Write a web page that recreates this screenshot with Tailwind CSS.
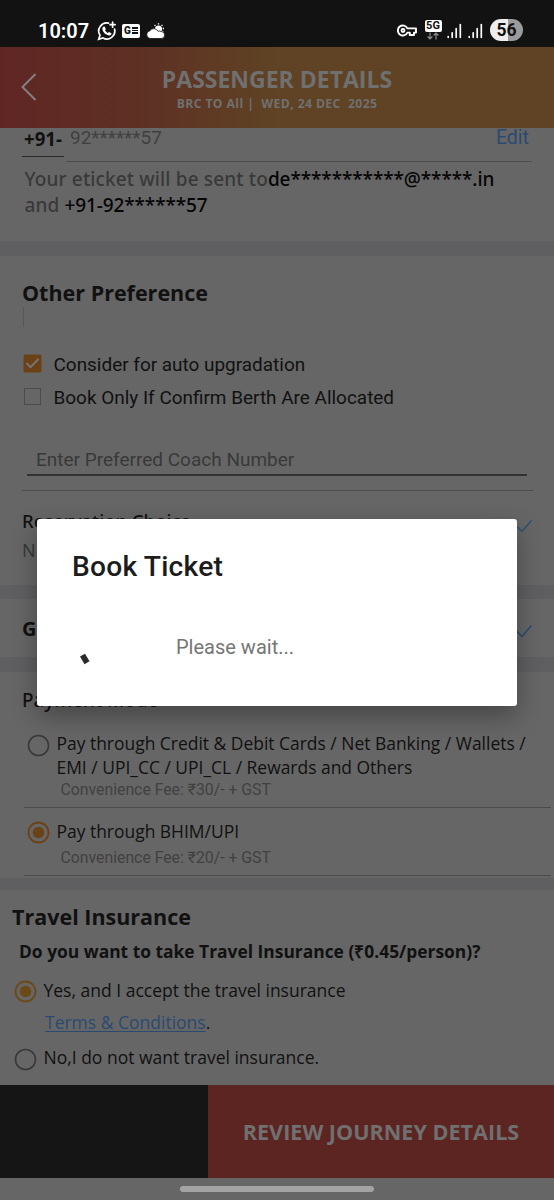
<!DOCTYPE html>
<html lang="en">
<head>
<meta charset="utf-8">
<title>Passenger Details</title>
<script src="https://cdn.jsdelivr.net/npm/@tailwindcss/browser@4"></script>
</head>
<body class="bg-[#666666]">
<div class="relative w-[554px] h-[1200px] overflow-hidden flex flex-col bg-[#666666] text-[#111111] font-['Open_Sans',sans-serif] whitespace-nowrap">

  <!-- Status bar -->
  <div class="h-[47px] shrink-0 bg-[#121212] flex items-center pl-[38px] pr-[31px] pt-[14px] text-white">
    <span class="w-[59px] font-['Roboto',sans-serif] font-semibold text-[20px] leading-none">10:07</span>
    <svg class="w-[20px] h-[20px]" viewBox="0 0 20 20" fill="none" stroke="#fff" stroke-width="1.7" stroke-linecap="round">
      <path d="M11.5 2.2A8 8 0 0 0 3 14.3L1.7 18.3L6 17A8 8 0 0 0 17.6 8.2"/>
      <path d="M15.6 1.2v5M13.1 3.7h5"/>
      <path d="M6.3 5.8l1.3-.4 1.3 2.7-.9 1.2c.7 1.3 1.5 2 2.8 2.7l1.2-1 2.5 1.2c.1 1.5-1.2 2.4-2.5 2.2-3.500-.6-6.300-3.500-6.600-6.200-.1-1 .2-1.900.9-2.400z" fill="#fff" stroke="none"/>
    </svg>
    <span class="ml-[5px] w-[18px] h-[14px] rounded-[2px] bg-white flex items-center gap-[1px] pl-[2px]">
      <span class="font-['Roboto',sans-serif] font-black text-[10px] leading-none text-[#121212]">G</span>
      <span class="flex flex-col gap-[1px]"><i class="block w-[6px] h-[2px] bg-[#121212]"></i><i class="block w-[6px] h-[1px] bg-[#121212]"></i><i class="block w-[6px] h-[2px] bg-[#121212]"></i></span>
    </span>
    <svg class="ml-[6px] w-[19px] h-[16px]" viewBox="0 0 19 16">
      <circle cx="12.500" cy="6" r="3.600" fill="#fff"/>
      <path d="M12.500 .3v1.200M8.600 1.800l.8 1M16.400 1.800l-.8 1M18 5.500h-1.200M17.300 9l-1-.6" stroke="#fff" stroke-width="1.300"/>
      <path d="M4.200 15.500a3.900 3.900 0 0 1-.3-7.700A4.600 4.600 0 0 1 12 8.300a3.400 3.400 0 0 1 3.300.2 3.500 3.500 0 0 1-.3 7z" fill="#fff" stroke="#121212" stroke-width=".8"/>
    </svg>
    <svg class="ml-auto w-[20px] h-[13px]" viewBox="0 0 20 13" fill="none" stroke="#fff" stroke-width="1.900" stroke-linejoin="round">
      <path d="M10.400 4.400A5 5 0 1 0 10.400 8.600H12.800V11H17V8.600H19V4.400Z"/>
      <circle cx="6" cy="6.500" r="1.500"/>
    </svg>
    <span class="ml-[7px] mt-[-2px] w-[18px] flex flex-col items-center">
      <span class="w-[17px] h-[12px] rounded-[2px] bg-white text-[#121212] font-['Roboto',sans-serif] font-bold text-[11px] leading-[12px] text-center">5G</span>
      <svg class="w-[12px] h-[8px]" viewBox="0 0 12 8" fill="none" stroke="#8a8a8a" stroke-width="1.200"><path d="M3 .5v6M.6 4.500L3 7l2.400-2.500M9 7.500v-6M6.600 3.500L9 1l2.400 2.500"/></svg>
    </span>
    <svg class="ml-[5px] w-[15px] h-[16px]" viewBox="0 0 15 16" stroke="#fff" stroke-width="1.700" stroke-linecap="round"><path d="M1.200 13.500v.8M5.200 9.800v4.500M9.200 5.700v8.600M13.300 1.500v12.800"/></svg>
    <svg class="ml-[6px] w-[15px] h-[16px]" viewBox="0 0 15 16" stroke="#fff" stroke-width="1.700" stroke-linecap="round"><path d="M1.200 13.500v.8M5.200 9.800v4.500M9.200 5.700v8.600M13.300 1.500v12.800"/></svg>
    <span class="ml-[7px] mt-[-1px] w-[33px] h-[22px] rounded-full bg-[linear-gradient(90deg,#eeeeee_56%,#9b9b9b_56%)] text-[#121212] font-['Roboto',sans-serif] font-bold text-[17.500px] leading-[22px] text-center">56</span>
  </div>

  <!-- Title bar -->
  <div class="h-[81px] shrink-0 flex bg-[linear-gradient(90deg,#602624_0%,#5e3024_25%,#5f4324_50%,#5f4324_100%)] text-[#707070]">
    <svg class="w-[16px] h-[28px] ml-[21px] mt-[26px] shrink-0" viewBox="0 0 16 28" fill="none" stroke="#818181" stroke-width="2"><path d="M14.500 1L1.500 14L14.500 27"/></svg>
    <div class="flex-1 flex flex-col items-center pt-[18px]">
      <div class="font-bold text-[23px] leading-[29px]">PASSENGER DETAILS</div>
      <div class="font-bold text-[12.200px] leading-[20px] tracking-[0.4px] whitespace-pre">BRC TO All |  WED, 24 DEC  2025</div>
    </div>
    <div class="w-[37px]"></div>
  </div>

  <!-- Contact -->
  <section class="h-[113px] shrink-0 text-[19px]">
    <div class="flex h-[34px]">
      <div class="ml-[22px] w-[42px] h-[29px] pl-[2px] border-b border-[#2b2b2b] font-bold text-[18.700px] leading-[22px]">+91-</div>
      <div class="ml-[2px] w-[466px] h-[34px] pl-[4px] pr-[3px] border-b border-[#4e4e4e] flex justify-between font-['Roboto',sans-serif] text-[19.500px] leading-[20px]">
        <span class="text-[19px] text-[#404040]">92******57</span><span class="text-[#2b4a70]">Edit</span>
      </div>
    </div>
    <p class="ml-[24.500px] mt-[4px] leading-[26px] font-['Noto_Sans',sans-serif] font-medium text-[#393939] tracking-[0.14px]">Your eticket will be sent to<span class="text-[#050505] tracking-[-0.1px]">de***********@*****.in</span><br>and <span class="text-[#050505] tracking-[-0.12px]">+91-92******57</span></p>
  </section>
  <div class="h-[15px] shrink-0 bg-[#5f5f62]"></div>

  <!-- Preferences -->
  <section class="h-[329px] shrink-0 pt-[23px] font-['Roboto',sans-serif]">
    <h2 class="pl-[22px] h-[28px] leading-[27px] font-['Open_Sans',sans-serif] font-bold text-[21.500px]">Other Preference</h2>
    <div class="ml-[23px] w-px h-[20px] bg-[#575757]"></div>
    <div class="mt-[20px] h-[33px] flex items-center pl-[23px] text-[18.950px]">
      <svg class="w-[19px] h-[19px] mr-[11.500px]" viewBox="0 0 19 19"><rect x=".5" y=".5" width="18" height="18" rx="1.500" fill="#6b4218"/><path d="M3.500 9l4 4.200L15.500 5" fill="none" stroke="#777" stroke-width="1.800"/></svg>
      <span class="pt-[3px]">Consider for auto upgradation</span>
    </div>
    <div class="h-[33px] flex items-center pl-[24px] text-[18.950px]">
      <span class="w-[17px] h-[17px] mr-[12.500px] border border-[#4c4c4c]"></span><span class="pt-[3px]">Book Only If Confirm Berth Are Allocated</span>
    </div>
    <div class="mt-[31px] ml-[27px] w-[500px] h-[32px] pl-[9px] border-b-2 border-[#333333] leading-[31px] text-[19px] text-[#393939]">Enter Preferred Coach Number</div>
    <div class="mt-[14px] ml-[22px] w-[511px] h-px bg-[#4d4d4d]"></div>
    <div class="mt-[16px] flex justify-between px-[22px] font-['Noto_Sans',sans-serif]">
      <div>
        <div class="text-[18.500px] font-medium leading-[28px]">Reservation Choice</div>
        <div class="text-[18px] leading-[30px] text-[#393939]">N</div>
      </div>
      <svg class="w-[22px] h-[14px] mt-[12px]" viewBox="0 0 22 14" fill="none" stroke="#2b5270" stroke-width="1.500"><path d="M5 5.500l7 7L21.500 1.500"/></svg>
    </div>
  </section>
  <div class="h-[14px] shrink-0 bg-[#5f5f62]"></div>

  <section class="h-[58px] shrink-0 flex items-center justify-between px-[22px]">
    <span class="pt-[2px] font-bold text-[20px]">G</span>
    <svg class="w-[22px] h-[14px] mt-[6px]" viewBox="0 0 22 14" fill="none" stroke="#2b4a70" stroke-width="1.500"><path d="M5 5.500l7 7L21.500 1.500"/></svg>
  </section>
  <div class="h-[15px] shrink-0 bg-[#5f5f62]"></div>

  <!-- Payment -->
  <section class="h-[206px] shrink-0 pt-[14px]">
    <div class="pl-[22px] h-[26px] leading-[28px] font-['Noto_Sans',sans-serif] font-medium text-[18.900px]">Payment Mode</div>
    <div class="mt-[19px] ml-[24px] w-[527px] h-[77px] border-b border-[#4b4b4b] flex">
      <svg class="ml-[3px] mt-[3px] w-[23px] h-[23px] shrink-0" viewBox="0 0 23 23"><circle cx="11.500" cy="11.500" r="10" fill="none" stroke="#393939" stroke-width="1.600"/></svg>
      <div class="ml-[6.500px]">
        <p class="text-[17.450px] leading-[24px]">Pay through Credit &amp; Debit Cards / Net Banking / Wallets /<br>EMI / UPI_CC / UPI_CL / Rewards and Others</p>
        <p class="pl-[4px] font-['Roboto',sans-serif] text-[15.800px] leading-[22px] text-[#414141]">Convenience Fee: ₹30/- + GST</p>
      </div>
    </div>
    <div class="ml-[24px] w-[527px] h-[68px] pt-[11px] border-b border-[#4b4b4b] flex">
      <svg class="ml-[3px] mt-[2px] w-[23px] h-[23px] shrink-0" viewBox="0 0 23 23"><circle cx="11.500" cy="11.500" r="10" fill="none" stroke="#6b4218" stroke-width="1.800"/><circle cx="11.500" cy="11.500" r="5.800" fill="#6b4218"/></svg>
      <div class="ml-[6.500px]">
        <p class="text-[17.450px] leading-[24px]">Pay through BHIM/UPI</p>
        <p class="mt-[4px] pl-[4px] font-['Roboto',sans-serif] text-[15.800px] leading-[22px] text-[#414141]">Convenience Fee: ₹20/- + GST</p>
      </div>
    </div>
  </section>
  <div class="h-[12px] shrink-0 bg-[#5f5f62]"></div>

  <!-- Insurance -->
  <section class="h-[195px] shrink-0 pt-[13px] text-[17.500px]">
    <h2 class="pl-[12px] font-bold text-[21.500px] leading-[28px]">Travel Insurance</h2>
    <p class="mt-[7px] mb-[14px] pl-[19px] font-bold text-[17.400px] leading-[26px]">Do you want to take Travel Insurance (₹0.45/person)?</p>
    <div class="flex h-[24px] pl-[14px]">
      <svg class="mt-[2px] w-[23px] h-[23px]" viewBox="0 0 23 23"><circle cx="11.500" cy="11.500" r="10" fill="none" stroke="#6b4a18" stroke-width="1.800"/><circle cx="11.500" cy="11.500" r="5.800" fill="#6b4a18"/></svg>
      <span class="ml-[6.500px] leading-[25px]">Yes, and I accept the travel insurance</span>
    </div>
    <p class="mt-[8px] pl-[45px] leading-[24px]"><span class="text-[#2b4a70] underline decoration-1 underline-offset-2">Terms &amp; Conditions</span>.</p>
    <div class="mt-[11px] flex h-[24px] pl-[14px]">
      <svg class="mt-[3px] w-[23px] h-[23px]" viewBox="0 0 23 23"><circle cx="11.500" cy="11.500" r="10" fill="none" stroke="#393939" stroke-width="1.600"/></svg>
      <span class="ml-[6.500px] leading-[24px]">No,I do not want travel insurance.</span>
    </div>
  </section>

  <!-- Footer -->
  <div class="h-[93px] shrink-0 flex">
    <div class="w-[208px] bg-[#151515]"></div>
    <div class="flex-1 bg-[#5c2522] flex items-center justify-center pt-[2px] font-bold text-[21.600px] text-[#707070]">REVIEW JOURNEY DETAILS</div>
  </div>
  <div class="h-[22px] shrink-0 flex justify-center items-center"><div class="w-[194px] h-[6px] rounded-full bg-[#a3a3a3]"></div></div>

  <!-- Progress dialog -->
  <div class="absolute left-[37px] top-[519px] w-[480px] h-[187px] rounded-[3px] bg-white shadow-[0_10px_26px_rgba(0,0,0,0.32)] pl-[35px] pt-[30px] font-['Roboto',sans-serif]">
    <div class="text-[28.200px] font-medium leading-[36px] tracking-[0.2px] text-[#1c1c1c]">Book Ticket</div>
    <div class="mt-[30px] flex">
      <svg class="mt-[38px] ml-[7px] w-[11px] h-[12px]" viewBox="0 0 11 12"><path d="M1 3.500L6 .7L10.500 8.200L5.500 11.300Z" fill="#2b2b2b"/></svg>
      <div class="ml-[86px] text-[20px] leading-[26px] pt-[19px] text-[#757575]">Please wait...</div>
    </div>
  </div>
</div>
</body>
</html>
